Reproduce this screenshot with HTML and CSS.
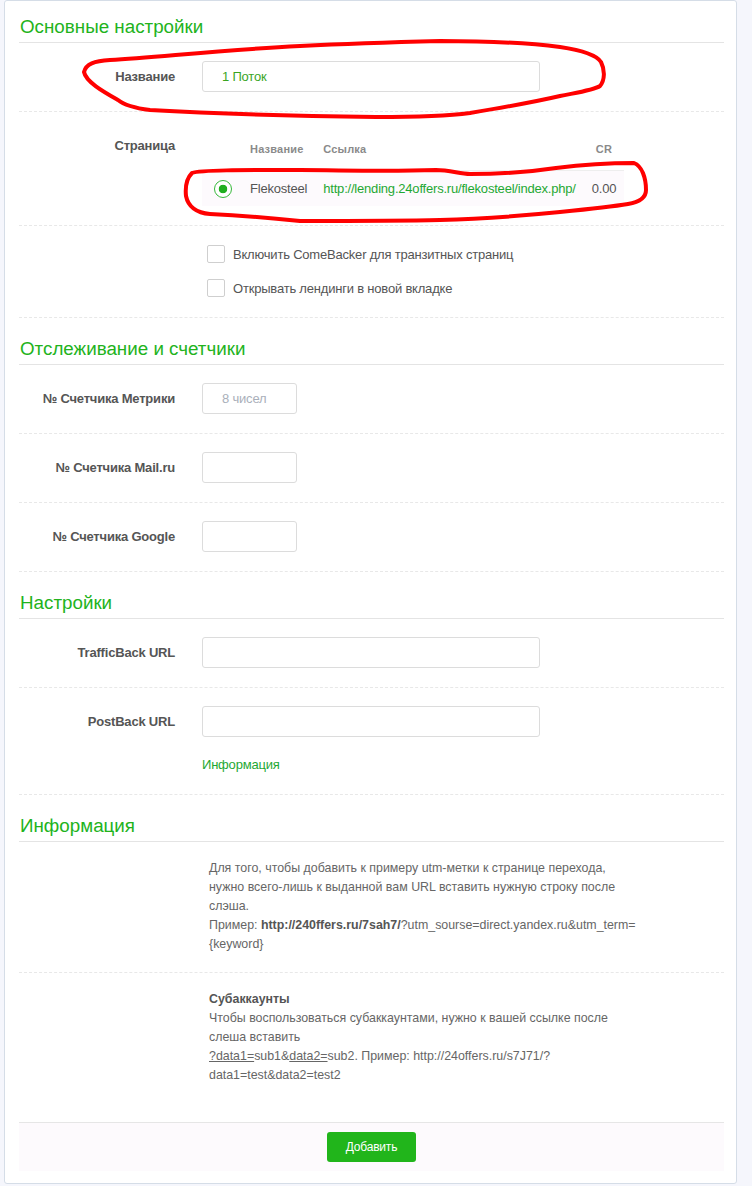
FILE: index.html
```html
<!DOCTYPE html>
<html lang="ru">
<head>
    <meta charset="UTF-8">
    <meta name="viewport" content="width=device-width, initial-scale=1.0">
    <title>Поток</title>
    <link rel="stylesheet" href="styles.css">
</head>
<body>
<div class="page">
    <form class="card" onsubmit="return false">
        <section class="block">
            <h2 class="block-title">Основные настройки</h2>
            <div class="form-row">
                <label class="row-label" for="name">Название</label>
                <div class="row-body">
                    <input type="text" id="name" class="field field-wide field-value" value="1 Поток">
                </div>
            </div>
            <div class="form-row">
                <label class="row-label">Страница</label>
                <div class="row-body">
                    <table class="pages">
                        <thead>
                            <tr>
                                <th></th>
                                <th>Название</th>
                                <th>Ссылка</th>
                                <th class="cr">CR</th>
                            </tr>
                        </thead>
                        <tbody>
                            <tr>
                                <td class="pick"><input type="radio" name="page" class="radio" checked></td>
                                <td>Flekosteel</td>
                                <td><a class="link" href="#">http://lending.24offers.ru/flekosteel/index.php/</a></td>
                                <td>0.00</td>
                            </tr>
                        </tbody>
                    </table>
                </div>
            </div>
            <div class="form-row">
                <div class="row-label"></div>
                <div class="row-body checks">
                    <label class="check"><input type="checkbox" class="box">Включить ComeBacker для транзитных страниц</label>
                    <label class="check"><input type="checkbox" class="box">Открывать лендинги в новой вкладке</label>
                </div>
            </div>
        </section>

        <section class="block">
            <h2 class="block-title">Отслеживание и счетчики</h2>
            <div class="form-row">
                <label class="row-label" for="ym">№ Счетчика Метрики</label>
                <div class="row-body">
                    <input type="text" id="ym" class="field field-short" placeholder="8 чисел">
                </div>
            </div>
            <div class="form-row">
                <label class="row-label" for="mail">№ Счетчика Mail.ru</label>
                <div class="row-body">
                    <input type="text" id="mail" class="field field-short">
                </div>
            </div>
            <div class="form-row">
                <label class="row-label" for="ga">№ Счетчика Google</label>
                <div class="row-body">
                    <input type="text" id="ga" class="field field-short">
                </div>
            </div>
        </section>

        <section class="block">
            <h2 class="block-title">Настройки</h2>
            <div class="form-row">
                <label class="row-label" for="tb">TrafficBack URL</label>
                <div class="row-body">
                    <input type="text" id="tb" class="field field-wide">
                </div>
            </div>
            <div class="form-row">
                <label class="row-label" for="pb">PostBack URL</label>
                <div class="row-body">
                    <input type="text" id="pb" class="field field-wide">
                    <a class="link info-link" href="#">Информация</a>
                </div>
            </div>
        </section>

        <section class="block">
            <h2 class="block-title">Информация</h2>
            <div class="form-row info-row">
                <div class="row-label"></div>
                <div class="row-body info-text">
                    Для того, чтобы добавить к примеру utm-метки к странице перехода,<br>
                    нужно всего-лишь к выданной вам URL вставить нужную строку после<br>
                    слэша.<br>
                    Пример: <b>http://240ffers.ru/7sah7/</b>?utm_sourse=direct.yandex.ru&amp;utm_term=<br>
                    {keyword}
                </div>
            </div>
            <div class="form-row info-row last">
                <div class="row-label"></div>
                <div class="row-body info-text">
                    <b>Субаккаунты</b><br>
                    Чтобы воспользоваться субаккаунтами, нужно к вашей ссылке после<br>
                    слеша вставить<br>
                    <u>?data1=</u>sub1&amp;<u>data2=</u>sub2. Пример: http://24offers.ru/s7J71/?<br>
                    data1=test&amp;data2=test2
                </div>
            </div>
        </section>

        <div class="form-footer">
            <button type="submit" class="btn">Добавить</button>
        </div>
    </form>

    <!-- пометки красным поверх скриншота -->
    <svg class="marks" width="752" height="1186" viewBox="0 0 752 1186">
        <path d="M118 100 C104 92 86 82 84 72 C86 64 94 61 110 60 C160 57 220 50 300 46 C360 43 400 42 440 41 C480 41 520 42 560 47 C580 50 596 54 601 62 C605 70 605 80 600 86 C594 90 580 92 560 96 C530 103 500 108 470 113 C440 117 400 117 376 117 C300 116 220 114 150 110 C134 108 124 105 118 100"/>
        <path d="M192 173 C200 170 240 170 300 170 C340 170 380 172 436 170 C450 170 460 174 470 174 C500 174 530 172 556 168 C580 165 610 163 634 163 C642 166 646 178 646 190 C646 198 640 202 628 204 C610 207 590 209 560 212 C520 216 480 219 440 220 C400 221 340 221 300 221 C280 219 250 216 210 214 C196 213 188 206 186 196 C185 186 187 178 192 173"/>
    </svg>
</div>
</body>
</html>
```

FILE: styles.css
```css
body {
    margin: 0;
    background-color: #f5f6fc;
    font-family: "Liberation Sans", Arial, sans-serif;
    font-size: 13px;
    letter-spacing: -0.2px;
    color: #666;
}
.page {
    position: relative;
    height: 1186px;
}
.card {
    box-sizing: border-box;
    width: 733px;
    margin: 0 0 0 4px;
    padding: 0 12px 12px 14px;
    background-color: white;
    border: 1px solid #d5dde7;
    border-radius: 3px;
}
.block-title {
    margin: 0;
    padding: 21px 0 5px 1px;
    font-size: 18.8px;
    line-height: 20px;
    font-weight: normal;
    letter-spacing: 0;
    color: #22b31c;
    border-bottom: 1px solid #e4e4e4;
}
.block:first-child .block-title {
    padding-top: 16px;
}
.form-row {
    display: flex;
    padding: 18px 0 19px;
    border-bottom: 1px dashed #e8e8e8;
}
.row-label {
    flex: none;
    width: 156px;
    margin-right: 27px;
    text-align: right;
    font-weight: bold;
    line-height: 31px;
    color: #555;
}
.row-body {
    flex: 1;
    min-width: 0;
}
.field {
    box-sizing: border-box;
    display: block;
    height: 31px;
    padding: 0 19px;
    border: 1px solid #dcdcdc;
    border-radius: 3px;
    font-family: inherit;
    font-size: 13px;
    letter-spacing: -0.2px;
    color: #555;
    background: white;
    outline: none;
}
.field::placeholder {
    color: #aab0ba;
}
.field-wide {
    width: 338px;
}
.field-short {
    width: 95px;
}
.field-value {
    color: #3aa51f;
}
.link {
    color: #1fa833;
    text-decoration: none;
}
.info-link {
    display: inline-block;
    margin-top: 18px;
    line-height: 20px;
}

/* таблица страниц */
.pages {
    border-collapse: collapse;
}
.pages th {
    padding: 10px 8px 11px;
    font-size: 11px;
    line-height: 19px;
    font-weight: bold;
    color: #8a8a8a;
    text-align: left;
    letter-spacing: 0.2px;
    border-bottom: 1px solid #eeeeee;
}
.pages th.cr {
    padding-left: 12px;
}
.pages td {
    padding: 8px;
    line-height: 19px;
    color: #555;
    background-color: #fdfafd;
    vertical-align: middle;
}
.pages td.pick {
    padding: 0 10px 0 12px;
}
.radio {
    -webkit-appearance: none;
    appearance: none;
    display: block;
    box-sizing: border-box;
    width: 18px;
    height: 18px;
    margin: 0;
    border: 1px solid #36b83a;
    border-radius: 50%;
    background: radial-gradient(circle, #1fae1f 0 4px, white 4.6px);
}

/* чекбоксы */
.checks {
    display: flex;
    flex-direction: column;
    gap: 14px;
}
.check {
    display: flex;
    align-items: center;
    height: 20px;
    padding-left: 5px;
    color: #555;
}
.box {
    -webkit-appearance: none;
    appearance: none;
    box-sizing: border-box;
    width: 18px;
    height: 18px;
    margin: 0 8px 0 0;
    border: 1px solid #cfcfcf;
    border-radius: 2px;
    background: white;
}

/* информационный блок */
.info-row {
    padding: 17px 0 18px;
}
.info-row.last {
    padding-bottom: 19px;
    border-bottom: none;
}
.info-text {
    padding-left: 7px;
    font-size: 12.4px;
    letter-spacing: 0;
    line-height: 19px;
    white-space: nowrap;
}
.info-text b {
    color: #555;
}

.form-footer {
    margin-top: 18px;
    padding: 9px 0;
    text-align: center;
    background-color: #fdfafd;
    border-top: 1px solid #e6e6e6;
}
.btn {
    height: 30px;
    padding: 0 19px;
    border: none;
    border-radius: 3px;
    background-color: #21b51b;
    color: white;
    font-family: inherit;
    font-size: 12px;
    letter-spacing: -0.2px;
    cursor: pointer;
}
.btn:hover {
    background-color: #1ea318;
}

.marks {
    position: absolute;
    top: 0;
    left: 0;
    pointer-events: none;
}
.marks path {
    fill: none;
    stroke: #ff0000;
    stroke-width: 4;
    stroke-linecap: round;
    stroke-linejoin: round;
}
```
